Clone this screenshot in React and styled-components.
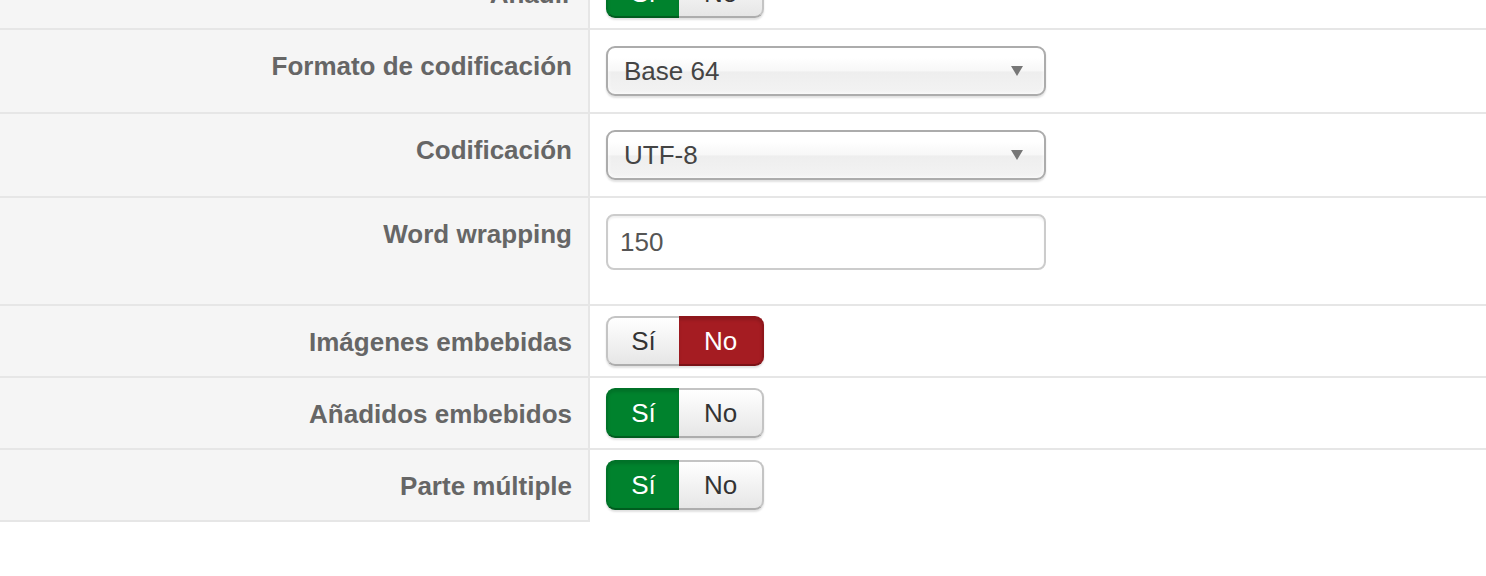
import React from "react";
import styled, { createGlobalStyle, css } from "styled-components";

const Global = createGlobalStyle`
  html, body { margin: 0; padding: 0; background: #fff; overflow: hidden; }
  body { font-family: "Liberation Sans", Arial, Helvetica, sans-serif; }
  * { box-sizing: border-box; }
`;

const Table = styled.div`
  margin-top: -44px;
  width: 100%;
  display: flex;
  flex-direction: column;
`;

const Row = styled.div`
  display: flex;
  align-items: flex-start;
  border-top: 2px solid #e6e6e6;
`;

const Label = styled.div`
  width: 590px;
  flex: none;
  align-self: stretch;
  background: #f5f5f5;
  border-right: 2px solid #e6e6e6;
  padding: 18px 16px 16px 16px;
  text-align: right;
  font-size: 26px;
  line-height: 36px;
  font-weight: bold;
  color: #666;
  ${(p) => p.$last && css`border-bottom: 2px solid #e6e6e6;`}
`;

const Cell = styled.div`
  flex: 1;
  padding: ${(p) => (p.$compact ? "10px 16px" : "16px 16px")};
  padding-bottom: ${(p) => (p.$help ? "34px" : p.$compact ? "10px" : "16px")};
`;

const Select = styled.div`
  width: 440px;
  height: 50px;
  display: flex;
  align-items: center;
  justify-content: space-between;
  padding: 0 20px 0 16px;
  border: 2px solid #acacac;
  border-radius: 9px;
  background: linear-gradient(#ffffff 20%, #f7f7f7 50%, #eeeeee 52%, #f3f3f3 100%);
  box-shadow: inset 0 0 4px #fff, 0 2px 2px rgba(0, 0, 0, 0.12);
  font-size: 26px;
  color: #444;
`;

const Arrow = styled.svg`
  width: 12px;
  height: 10px;
  flex: none;
  margin-right: 1px;
`;

const TextInput = styled.input`
  display: block;
  width: 440px;
  height: 56px;
  padding: 0 12px;
  border: 2px solid #cccccc;
  border-radius: 8px;
  background: #fff;
  box-shadow: inset 0 2px 2px rgba(0, 0, 0, 0.06);
  font-family: "Liberation Sans", Arial, sans-serif;
  font-size: 26px;
  color: #555;
  outline: none;
`;

const Group = styled.div`
  display: inline-flex;
  border-radius: 9px;
  box-shadow: 0 2px 2px rgba(0, 0, 0, 0.12);
`;

const Toggle = styled.span`
  height: 50px;
  display: flex;
  align-items: center;
  justify-content: center;
  padding: 0 22px;
  min-width: ${(p) => p.$w}px;
  font-size: 26px;
  color: #333;
  border: 2px solid #c4c4c4;
  border-bottom-color: #adadad;
  background: linear-gradient(#ffffff, #e6e6e6);
  &:first-child { border-radius: 9px 0 0 9px; border-right: none; }
  &:last-child { border-radius: 0 9px 9px 0; border-left: none; }
  ${(p) =>
    p.$tone === "yes" &&
    css`
      background: #00822d;
      border-color: #007228;
      border-bottom-color: #005c1f;
      color: #fff;
      box-shadow: inset 0 2px 3px rgba(0, 0, 0, 0.12);
    `}
  ${(p) =>
    p.$tone === "no" &&
    css`
      background: #a51c22;
      border-color: #8f161b;
      border-bottom-color: #7a1216;
      color: #fff;
      box-shadow: inset 0 2px 3px rgba(0, 0, 0, 0.15);
    `}
`;

function YesNo({ value }) {
  return (
    <Group>
      <Toggle $w={73} $tone={value ? "yes" : undefined}>Sí</Toggle>
      <Toggle $w={85} $tone={!value ? "no" : undefined}>No</Toggle>
    </Group>
  );
}

function FakeSelect({ text }) {
  return (
    <Select>
      <span>{text}</span>
      <Arrow viewBox="0 0 12 10">
        <polygon points="0,0 12,0 6,10" fill="#777" />
      </Arrow>
    </Select>
  );
}

export default function App() {
  return (
    <>
      <Global />
      <Table>
        <Row>
          <Label>Añadir</Label>
          <Cell $compact>
            <YesNo value={true} />
          </Cell>
        </Row>
        <Row>
          <Label>Formato de codificación</Label>
          <Cell>
            <FakeSelect text="Base 64" />
          </Cell>
        </Row>
        <Row>
          <Label>Codificación</Label>
          <Cell>
            <FakeSelect text="UTF-8" />
          </Cell>
        </Row>
        <Row>
          <Label>Word wrapping</Label>
          <Cell $help>
            <TextInput defaultValue="150" />
          </Cell>
        </Row>
        <Row>
          <Label>Imágenes embebidas</Label>
          <Cell $compact>
            <YesNo value={false} />
          </Cell>
        </Row>
        <Row>
          <Label>Añadidos embebidos</Label>
          <Cell $compact>
            <YesNo value={true} />
          </Cell>
        </Row>
        <Row>
          <Label $last>Parte múltiple</Label>
          <Cell $compact>
            <YesNo value={true} />
          </Cell>
        </Row>
      </Table>
    </>
  );
}
